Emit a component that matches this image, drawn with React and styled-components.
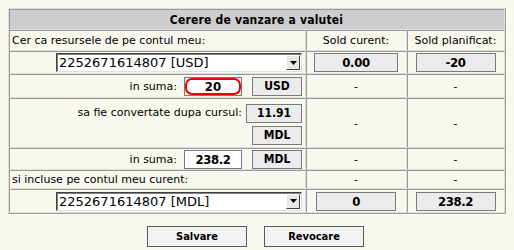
import React from "react";
import styled, { createGlobalStyle } from "styled-components";

const GlobalStyle = createGlobalStyle`
  body {
    margin: 8px;
    background: #f8f8ef;
    font-family: "DejaVu Sans", sans-serif;
    font-size: 11px;
    color: #000;
  }
`;

const Form = styled.form`
  width: 498px;
`;

const Table = styled.table`
  width: 498px;
  border-collapse: separate;
  border-spacing: 0;
  border: 1px solid;
  border-color: #dcdcdc #a0a0a0 #a0a0a0 #dcdcdc;
  table-layout: fixed;
`;

const Row = styled.tr`
  height: ${(p) => p.h}px;
`;

const Cell = styled.td`
  border: 1px solid;
  border-color: #9a9a9a #dcdcdc #dcdcdc #9a9a9a;
  padding: 0 3px 0 2px;
  text-align: ${(p) => p.align || "center"};
  vertical-align: middle;
  white-space: nowrap;
`;

const HeadCell = styled(Cell)`
  background: #cdcdcd;
  font-family: "DejaVu Sans Condensed", sans-serif;
  font-weight: bold;
  font-size: 12px;
  letter-spacing: 0.2px;
`;

const Line = styled.div`
  display: flex;
  justify-content: flex-end;
  align-items: center;
  gap: ${(p) => p.gap || 7}px;
`;

const Stack = styled.div`
  display: flex;
  flex-direction: column;
  align-items: flex-end;
  gap: 3px;
  padding-top: 2px;
`;

const Label = styled.span`
  align-self: ${(p) => (p.top ? "flex-start" : "center")};
  padding-top: ${(p) => (p.top ? 2 : 0)}px;
`;

const Select = styled.div`
  display: flex;
  align-items: center;
  width: 244px;
  height: 17px;
  margin-left: auto;
  background: #fff;
  border: 1px solid;
  border-color: #404040 #e0e0e0 #e0e0e0 #404040;
  box-shadow: inset 1px 1px 0 #808080;
  font-size: 13px;
`;

const SelectText = styled.span`
  flex: 1;
  padding-left: 2px;
  text-align: left;
`;

const Arrow = styled.span`
  width: 12px;
  height: 13px;
  margin-right: 1px;
  background: #e8e8e8;
  border: 1px solid;
  border-color: #fff #404040 #404040 #fff;
  display: flex;
  align-items: center;
  justify-content: center;
`;

const Box = styled.div`
  width: ${(p) => p.w}px;
  height: 17px;
  margin: ${(p) => (p.center ? "0 auto" : "0")};
  display: flex;
  align-items: center;
  justify-content: center;
  background: ${(p) => (p.white ? "#fff" : "#ebebeb")};
  border: 1px solid #7a7a7a;
  font-family: "DejaVu Sans Condensed", sans-serif;
  font-weight: bold;
  font-size: ${(p) => p.fs || 13}px;
  letter-spacing: ${(p) => (p.narrow ? "-0.4px" : "0")};
`;

const RedFrame = styled.div`
  width: 56px;
  height: 17px;
  border: 1px solid #7a7a7a;
  display: flex;
`;

const RedInput = styled.div`
  flex: 1;
  background: #fff;
  border: 2px solid #ee0000;
  border-radius: 7px;
  display: flex;
  align-items: center;
  justify-content: center;
  font-family: "DejaVu Sans Condensed", sans-serif;
  font-weight: bold;
  font-size: 13px;
`;

const Dash = styled.span``;

const Buttons = styled.div`
  display: flex;
  justify-content: center;
  gap: 17px;
  margin-top: 12px;
  padding-right: 3px;
`;

const Button = styled.button`
  width: 100px;
  height: 21px;
  background: #f2f2f2;
  border: 1px solid #5a5a5a;
  font-family: "DejaVu Sans Condensed", sans-serif;
  font-weight: bold;
  font-size: 11px;
  cursor: pointer;
`;

const Account = ({ value }) => (
  <Select>
    <SelectText>{value}</SelectText>
    <Arrow>
      <svg width="7" height="4" viewBox="0 0 7 4">
        <path d="M0 0h7L3.5 4z" fill="#000" />
      </svg>
    </Arrow>
  </Select>
);

export default function App() {
  return (
    <>
      <GlobalStyle />
      <Form>
        <Table>
          <colgroup>
            <col style={{ width: 297 }} />
            <col style={{ width: 101 }} />
            <col style={{ width: 98 }} />
          </colgroup>
          <tbody>
            <Row h={21}>
              <HeadCell colSpan={3}>Cerere de vanzare a valutei</HeadCell>
            </Row>
            <Row h={21}>
              <Cell align="left">Cer ca resursele de pe contul meu:</Cell>
              <Cell>Sold curent:</Cell>
              <Cell>Sold planificat:</Cell>
            </Row>
            <Row h={23}>
              <Cell>
                <Account value="2252671614807 [USD]" />
              </Cell>
              <Cell>
                <Box w={82} center narrow>0.00</Box>
              </Cell>
              <Cell>
                <Box w={78} center narrow>-20</Box>
              </Cell>
            </Row>
            <Row h={24}>
              <Cell>
                <Line>
                  <Label>in suma:</Label>
                  <RedFrame>
                    <RedInput>20</RedInput>
                  </RedFrame>
                  <Box w={48} fs={12} style={{ marginLeft: 3 }}>USD</Box>
                </Line>
              </Cell>
              <Cell><Dash>-</Dash></Cell>
              <Cell><Dash>-</Dash></Cell>
            </Row>
            <Row h={50}>
              <Cell>
                <Stack>
                  <Line gap={4}>
                    <Label top>sa fie convertate dupa cursul:</Label>
                    <Box w={54} fs={12}>11.91</Box>
                  </Line>
                  <Box w={48} fs={12}>MDL</Box>
                </Stack>
              </Cell>
              <Cell><Dash>-</Dash></Cell>
              <Cell><Dash>-</Dash></Cell>
            </Row>
            <Row h={22}>
              <Cell>
                <Line>
                  <Label>in suma:</Label>
                  <Box w={56} white narrow>238.2</Box>
                  <Box w={48} fs={12} style={{ marginLeft: 3 }}>MDL</Box>
                </Line>
              </Cell>
              <Cell><Dash>-</Dash></Cell>
              <Cell><Dash>-</Dash></Cell>
            </Row>
            <Row h={19}>
              <Cell align="left">si incluse pe contul meu curent:</Cell>
              <Cell><Dash>-</Dash></Cell>
              <Cell><Dash>-</Dash></Cell>
            </Row>
            <Row h={24}>
              <Cell>
                <Account value="2252671614807 [MDL]" />
              </Cell>
              <Cell>
                <Box w={78} center narrow>0</Box>
              </Cell>
              <Cell>
                <Box w={78} center narrow>238.2</Box>
              </Cell>
            </Row>
          </tbody>
        </Table>
        <Buttons>
          <Button type="button">Salvare</Button>
          <Button type="button">Revocare</Button>
        </Buttons>
      </Form>
    </>
  );
}
